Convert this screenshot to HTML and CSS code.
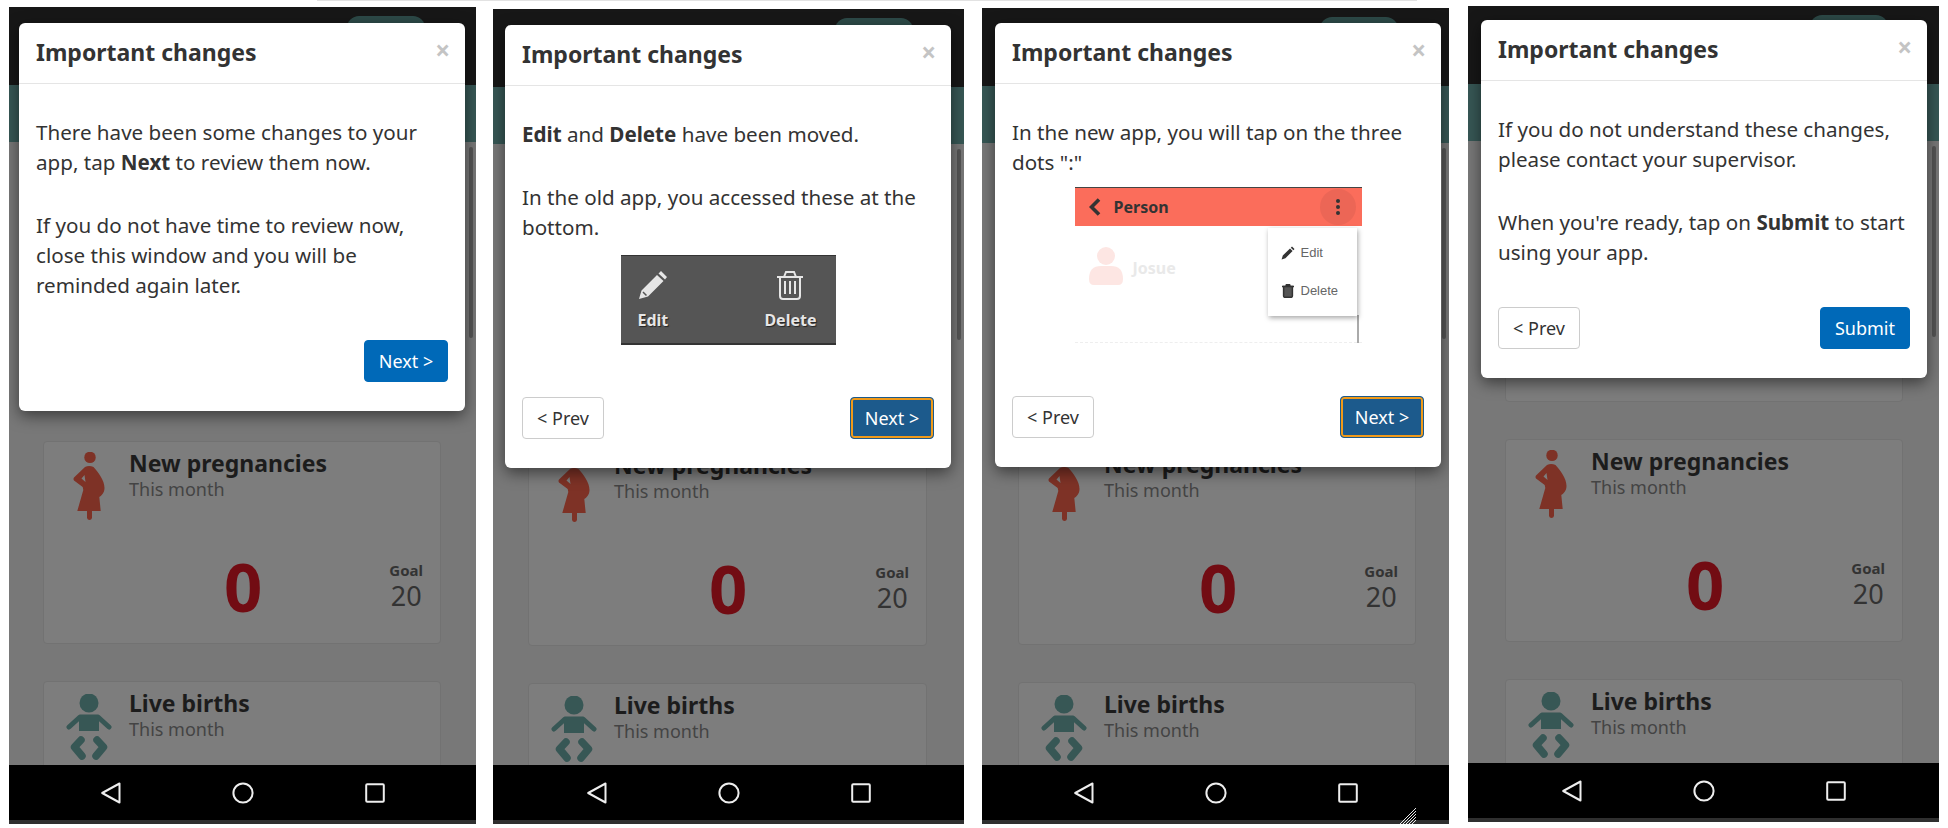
FILE: index.html
```html
<!DOCTYPE html>
<html lang="en">
<head>
    <meta charset="UTF-8">
    <title>Important changes</title>
    <link rel="stylesheet" href="styles.css">
</head>
<body>

    <svg class="defs" width="0" height="0">
        <symbol id="mother" viewBox="0 0 32 68">
            <circle cx="17" cy="5.4" r="5.7"/>
            <path fill-rule="evenodd" d="M12 15 Q16 13 20.5 15 C25 20 31.5 28 31.5 36 C31.5 41 28 44 26.3 45 L27.7 59 H19 V66 A2.6 2.6 0 0 1 14 66 V59 H4.3 L10.3 38 L9.7 35 L1 28.5 Q0 27 1 25.5 Z M8.5 26.5 L11.5 23 L12.5 30 Z"/>
        </symbol>
        <symbol id="baby" viewBox="0 0 46 68">
            <circle cx="23" cy="9" r="9.5"/>
            <path d="M3 33 L14 23 H32 L43 33" fill="none" stroke="#375755" stroke-width="5" stroke-linecap="round" stroke-linejoin="round"/>
            <rect x="13" y="22" width="20" height="15"/>
            <path d="M15 46 L8.5 53 L16 62 M31 46 L37.5 53 L30 62" fill="none" stroke="#375755" stroke-width="7.5" stroke-linecap="round" stroke-linejoin="round"/>
        </symbol>
    </svg>

    <!-- step 1 -->
    <div class="phone phone-one">
        <div class="status-bar"><span class="status-pill"></span></div>
        <div class="app-band"></div>
        <div class="app-content">
            <div class="card card-empty"></div>
            <div class="card">
                <div class="card-top">
                    <svg class="icon-mother"><use href="#mother"/></svg>
                    <div><div class="card-title">New pregnancies</div><div class="card-sub">This month</div></div>
                </div>
                <div class="card-count">0</div>
                <div class="card-goal"><b>Goal</b><span>20</span></div>
            </div>
            <div class="card">
                <div class="card-top">
                    <svg class="icon-baby"><use href="#baby"/></svg>
                    <div><div class="card-title">Live births</div><div class="card-sub">This month</div></div>
                </div>
            </div>
            <span class="scroll-thumb"></span>
        </div>
        <div class="nav-bar">
            <svg class="nav-back" viewBox="0 0 20 22"><path d="M18.5 1.5 V20.5 L1.2 11 Z"/></svg>
            <svg class="nav-home" viewBox="0 0 22 22"><circle cx="11" cy="11" r="9.6"/></svg>
            <svg class="nav-recent" viewBox="0 0 20 20"><rect x="1.2" y="1.2" width="17.6" height="17.6" rx="1"/></svg>
        </div>
        <div class="modal">
            <div class="modal-header"><h2>Important changes</h2><span class="modal-close">×</span></div>
            <div class="modal-body">
                <p>There have been some changes to your app, tap <b>Next</b> to review them now.</p>
                <p>If you do not have time to review now, close this window and you will be reminded again later.</p>
            </div>
            <div class="modal-footer footer-end"><button class="btn btn-next">Next &gt;</button></div>
        </div>
    </div>

    <!-- step 2 -->
    <div class="phone phone-two">
        <div class="status-bar"><span class="status-pill"></span></div>
        <div class="app-band"></div>
        <div class="app-content">
            <div class="card card-empty"></div>
            <div class="card">
                <div class="card-top">
                    <svg class="icon-mother"><use href="#mother"/></svg>
                    <div><div class="card-title">New pregnancies</div><div class="card-sub">This month</div></div>
                </div>
                <div class="card-count">0</div>
                <div class="card-goal"><b>Goal</b><span>20</span></div>
            </div>
            <div class="card">
                <div class="card-top">
                    <svg class="icon-baby"><use href="#baby"/></svg>
                    <div><div class="card-title">Live births</div><div class="card-sub">This month</div></div>
                </div>
            </div>
            <span class="scroll-thumb"></span>
        </div>
        <div class="nav-bar">
            <svg class="nav-back" viewBox="0 0 20 22"><path d="M18.5 1.5 V20.5 L1.2 11 Z"/></svg>
            <svg class="nav-home" viewBox="0 0 22 22"><circle cx="11" cy="11" r="9.6"/></svg>
            <svg class="nav-recent" viewBox="0 0 20 20"><rect x="1.2" y="1.2" width="17.6" height="17.6" rx="1"/></svg>
        </div>
        <div class="modal">
            <div class="modal-header"><h2>Important changes</h2><span class="modal-close">×</span></div>
            <div class="modal-body">
                <p><b>Edit</b> and <b>Delete</b> have been moved.</p>
                <p>In the old app, you accessed these at the bottom.</p>
                <div class="old-bar">
                    <div class="old-action">
                        <svg viewBox="0 0 30 30"><path d="M23 1 L29 7 L27 9.5 L20.5 3.5 Z M19 5 L25.5 11 L10 26.5 L1 29 L3.5 20.5 Z" fill="#e6e6e6"/><path d="M5 22 L8.5 25.5" stroke="#555" stroke-width="1.5"/></svg>
                        <span>Edit</span>
                    </div>
                    <div class="old-action">
                        <svg viewBox="0 0 30 30" fill="none" stroke="#e6e6e6" stroke-width="2"><path d="M2 7 H28 M9 7 L11 2 H19 L21 7"/><path d="M5 7 V26 Q5 29 8 29 H22 Q25 29 25 26 V7"/><path d="M10 11 V24 M15 11 V24 M20 11 V24"/></svg>
                        <span>Delete</span>
                    </div>
                </div>
            </div>
            <div class="modal-footer">
                <button class="btn btn-prev">&lt; Prev</button>
                <button class="btn btn-next btn-focus">Next &gt;</button>
            </div>
        </div>
    </div>

    <!-- step 3 -->
    <div class="phone phone-three">
        <div class="status-bar"><span class="status-pill"></span></div>
        <div class="app-band"></div>
        <div class="app-content">
            <div class="card card-empty"></div>
            <div class="card">
                <div class="card-top">
                    <svg class="icon-mother"><use href="#mother"/></svg>
                    <div><div class="card-title">New pregnancies</div><div class="card-sub">This month</div></div>
                </div>
                <div class="card-count">0</div>
                <div class="card-goal"><b>Goal</b><span>20</span></div>
            </div>
            <div class="card">
                <div class="card-top">
                    <svg class="icon-baby"><use href="#baby"/></svg>
                    <div><div class="card-title">Live births</div><div class="card-sub">This month</div></div>
                </div>
            </div>
            <span class="scroll-thumb"></span>
        </div>
        <div class="nav-bar">
            <svg class="nav-back" viewBox="0 0 20 22"><path d="M18.5 1.5 V20.5 L1.2 11 Z"/></svg>
            <svg class="nav-home" viewBox="0 0 22 22"><circle cx="11" cy="11" r="9.6"/></svg>
            <svg class="nav-recent" viewBox="0 0 20 20"><rect x="1.2" y="1.2" width="17.6" height="17.6" rx="1"/></svg>
        </div>
        <svg class="resize-grip" viewBox="0 0 16 16"><path d="M0 16 L16 0 M3 16 L16 3 M6 16 L16 6 M9 16 L16 9 M12 16 L16 12"/></svg>
        <div class="modal">
            <div class="modal-header"><h2>Important changes</h2><span class="modal-close">×</span></div>
            <div class="modal-body">
                <p>In the new app, you will tap on the three dots ":"</p>
                <div class="new-shot">
                    <div class="new-bar">
                        <svg class="new-chevron" viewBox="0 0 12 18"><path d="M10 1.5 L2.5 9 L10 16.5" fill="none" stroke="#333" stroke-width="3.6"/></svg>
                        <span class="new-title">Person</span>
                        <span class="new-dots"><i></i><i></i><i></i></span>
                    </div>
                    <div class="new-person">
                        <svg viewBox="0 0 34 38"><circle cx="17" cy="9" r="9"/><path d="M0 32 Q0 19 12 19 H22 Q34 19 34 32 Q34 38 29 38 H5 Q0 38 0 32 Z"/></svg>
                        <span>Josue</span>
                    </div>
                    <span class="new-scroll"></span>
                    <div class="new-menu">
                        <div class="new-item">
                            <svg viewBox="0 0 14 14"><path d="M11 .5 L13.5 3 L12.4 4.2 L9.8 1.7 Z M9 2.5 L11.6 5 L4.4 12.2 L.6 13.4 L1.8 9.6 Z"/></svg>
                            <span>Edit</span>
                        </div>
                        <div class="new-item">
                            <svg viewBox="0 0 14 14" fill="none" stroke="#333" stroke-width="1.5"><path d="M1 2.6 H13 M4.8 2.6 L5.4 .8 H8.6 L9.2 2.6"/><path d="M2.6 2.6 V12 Q2.6 13.3 3.9 13.3 H10.1 Q11.4 13.3 11.4 12 V2.6 Z" fill="#555"/></svg>
                            <span>Delete</span>
                        </div>
                    </div>
                </div>
            </div>
            <div class="modal-footer">
                <button class="btn btn-prev">&lt; Prev</button>
                <button class="btn btn-next btn-focus">Next &gt;</button>
            </div>
        </div>
    </div>

    <!-- step 4 -->
    <div class="phone phone-four">
        <div class="status-bar"><span class="status-pill"></span></div>
        <div class="app-band"></div>
        <div class="app-content">
            <div class="card card-empty"></div>
            <div class="card">
                <div class="card-top">
                    <svg class="icon-mother"><use href="#mother"/></svg>
                    <div><div class="card-title">New pregnancies</div><div class="card-sub">This month</div></div>
                </div>
                <div class="card-count">0</div>
                <div class="card-goal"><b>Goal</b><span>20</span></div>
            </div>
            <div class="card">
                <div class="card-top">
                    <svg class="icon-baby"><use href="#baby"/></svg>
                    <div><div class="card-title">Live births</div><div class="card-sub">This month</div></div>
                </div>
            </div>
            <span class="scroll-thumb"></span>
        </div>
        <div class="nav-bar">
            <svg class="nav-back" viewBox="0 0 20 22"><path d="M18.5 1.5 V20.5 L1.2 11 Z"/></svg>
            <svg class="nav-home" viewBox="0 0 22 22"><circle cx="11" cy="11" r="9.6"/></svg>
            <svg class="nav-recent" viewBox="0 0 20 20"><rect x="1.2" y="1.2" width="17.6" height="17.6" rx="1"/></svg>
        </div>
        <div class="modal">
            <div class="modal-header"><h2>Important changes</h2><span class="modal-close">×</span></div>
            <div class="modal-body">
                <p>If you do not understand these changes, please contact your supervisor.</p>
                <p>When you're ready, tap on <b>Submit</b> to start using your app.</p>
            </div>
            <div class="modal-footer">
                <button class="btn btn-prev">&lt; Prev</button>
                <button class="btn btn-next btn-submit">Submit</button>
            </div>
        </div>
    </div>

</body>
</html>
```

FILE: styles.css
```css
html, body {
    margin: 0;
    height: 828px;
    overflow: hidden;
    background-color: #fff;
}
body {
    position: relative;
    display: flex;
    align-items: flex-start;
    font-family: "Noto Sans", Arial, sans-serif;
    color: #333;
}
/* edge of the window left in the top of the screenshot */
body::before {
    content: "";
    position: absolute;
    top: 0;
    left: 317px;
    width: 1100px;
    height: 1px;
    background-color: #e2e2e2;
}
.defs {
    position: absolute;
}

/* phones */
.phone {
    position: relative;
    display: flex;
    flex-direction: column;
    overflow: hidden;
    box-sizing: border-box;
    background-color: #787878;
}
.phone-one {
    width: 467px;
    height: 817px;
    margin: 7px 0 0 9px;
}
.phone-two {
    width: 471px;
    height: 815px;
    margin: 9px 0 0 17px;
}
.phone-three {
    width: 467px;
    height: 816px;
    margin: 8px 0 0 18px;
}
.phone-four {
    width: 471px;
    height: 816px;
    margin: 6px 0 0 19px;
}
.status-bar {
    flex: none;
    position: relative;
    height: 78px;
    background-color: #171717;
}
.status-pill {
    position: absolute;
    top: 9px;
    right: 51px;
    width: 78px;
    height: 30px;
    border-radius: 12px;
    background-color: #2d4a48;
}
.app-band {
    flex: none;
    height: 57px;
    background-color: #375755;
}
.app-content {
    position: relative;
    flex: 1;
    min-height: 0;
    overflow: hidden;
    padding: 59px 35px 0 34px;
}
.phone-two .app-content { padding: 59px 37px 0 35px; }
.phone-three .app-content { padding: 59px 33px 0 36px; }
.phone-four .app-content { padding: 58px 36px 0 37px; }
.scroll-thumb {
    position: absolute;
    top: 5px;
    right: 3px;
    width: 4px;
    height: 191px;
    border-radius: 2px;
    background-color: #555;
}
.nav-bar {
    flex: none;
    display: flex;
    align-items: center;
    justify-content: center;
    gap: 111px;
    height: 54px;
    padding-top: 1px;
    border-bottom: 4px solid #2f2f2f;
    background-color: #000;
}
.nav-bar svg {
    fill: none;
    stroke: #eee;
    stroke-width: 2;
    stroke-linejoin: round;
}
.nav-back {
    width: 20px;
    height: 22px;
}
.nav-home {
    width: 22px;
    height: 22px;
}
.nav-recent {
    width: 20px;
    height: 20px;
}
.resize-grip {
    position: absolute;
    left: 418px;
    top: 800px;
    width: 16px;
    height: 16px;
    fill: none;
    stroke: #fff;
    stroke-width: .9;
}

/* cards behind the dialog */
.card {
    position: relative;
    box-sizing: border-box;
    height: 203px;
    margin-bottom: 37px;
    border: 1px solid #727272;
    border-radius: 4px;
    background-color: #7d7d7d;
}
.card-top {
    display: flex;
    gap: 24px;
    padding: 7px 0 0 29px;
}
.card-top svg {
    flex: none;
}
.icon-mother {
    width: 32px;
    height: 68px;
    margin-top: 3px;
    fill: #7e3226;
}
.icon-baby {
    width: 46px;
    height: 68px;
    margin: 5px -7px 0 -7px;
    fill: #375755;
}
.card-title {
    font-size: 23px;
    font-weight: bold;
    line-height: 28px;
    color: #1c1c1c;
}
.card-sub {
    font-size: 18px;
    line-height: 24px;
    color: #444;
}
.card-count {
    position: absolute;
    left: 180px;
    top: 99px;
    font-size: 67px;
    font-weight: bold;
    line-height: 90px;
    color: #720c13;
}
.card-goal {
    position: absolute;
    right: 17px;
    top: 117px;
    display: flex;
    flex-direction: column;
    align-items: center;
    color: #333;
}
.card-goal b {
    font-size: 15px;
    line-height: 22px;
}
.card-goal span {
    font-size: 27px;
    line-height: 30px;
}

/* dialog */
.modal {
    position: absolute;
    width: 446px;
    border-radius: 6px;
    background-color: #fff;
    box-shadow: 0 5px 15px rgba(0, 0, 0, .5);
}
.phone-one .modal { left: 10px; top: 16px; }
.phone-two .modal { left: 12px; top: 16px; }
.phone-three .modal { left: 13px; top: 15px; }
.phone-four .modal { left: 13px; top: 14px; }

.modal-header {
    display: flex;
    justify-content: space-between;
    box-sizing: border-box;
    height: 61px;
    padding: 0 17px;
    border-bottom: 1px solid #e5e5e5;
}
.modal-header h2 {
    margin: 0;
    font-size: 23px;
    line-height: 59px;
}
.modal-close {
    margin-right: -2px;
    font-size: 26px;
    font-weight: bold;
    line-height: 55px;
    color: #c4c4c4;
}
.modal-body {
    padding: 33px 17px 0 17px;
    font-size: 20.6px;
    line-height: 30px;
}
.modal-body p {
    margin: 0 0 33px 0;
}
.modal-body p:last-of-type {
    margin-bottom: 0;
}
.modal-footer {
    display: flex;
    justify-content: space-between;
    padding: 40px 17px 29px 17px;
}
.footer-end {
    justify-content: flex-end;
}
.btn {
    box-sizing: border-box;
    height: 42px;
    padding: 0;
    border-radius: 4px;
    font-family: inherit;
    font-size: 18px;
}
.btn-prev {
    width: 82px;
    border: 1px solid #ccc;
    background-color: #fff;
    color: #333;
}
.btn-next {
    width: 84px;
    border: 1px solid #0069b8;
    background-color: #0069b8;
    color: #fff;
}
.btn-focus {
    border: 1px solid #1c5a8c;
    background-color: #1c5a8c;
    box-shadow: inset 0 0 0 2px #f09a1a;
}
.btn-submit {
    width: 90px;
}

/* old action bar picture */
.old-bar {
    display: flex;
    justify-content: space-between;
    box-sizing: border-box;
    width: 215px;
    height: 90px;
    margin: 13px auto 12px auto;
    padding: 14px 19px 0 17px;
    border-top: 1px solid #333;
    border-bottom: 2px solid #333;
    background-color: #555;
}
.old-action {
    display: flex;
    flex-direction: column;
    align-items: center;
    font-size: 16px;
    font-weight: bold;
    line-height: 20px;
    color: #e6e6e6;
    text-shadow: 1px 1px 1px #222;
}
.old-action svg {
    width: 30px;
    height: 30px;
    margin-bottom: 10px;
}

/* new menu picture */
.new-shot {
    position: relative;
    width: 287px;
    height: 156px;
    margin: 10px auto 13px auto;
    border-bottom: 1px dashed #eee;
    box-sizing: border-box;
}
.new-bar {
    display: flex;
    align-items: center;
    box-sizing: border-box;
    height: 39px;
    padding: 0 6px 0 14px;
    border-top: 1px solid #444;
    background-color: #fb6d5b;
}
.new-chevron {
    width: 12px;
    height: 18px;
    margin-right: 13px;
}
.new-title {
    font-size: 16px;
    font-weight: bold;
    color: #333;
}
.new-dots {
    display: flex;
    flex-direction: column;
    align-items: center;
    justify-content: center;
    gap: 2px;
    width: 36px;
    height: 36px;
    margin-left: auto;
    border-radius: 50%;
    background-color: #ec6656;
}
.new-dots i {
    width: 4px;
    height: 4px;
    border-radius: 50%;
    background-color: #333;
}
.new-person {
    display: flex;
    align-items: center;
    gap: 10px;
    padding: 21px 0 0 14px;
    font-size: 16px;
    line-height: 24px;
    font-weight: bold;
    color: #e9e9e9;
}
.new-person svg {
    width: 34px;
    height: 38px;
    fill: #fde6e3;
}
.new-person span {
    margin-top: 3px;
}
.new-scroll {
    position: absolute;
    right: 3px;
    top: 128px;
    width: 2px;
    height: 28px;
    background-color: #aaa;
}
/* dropdown lies over the picture */
.new-menu {
    position: absolute;
    left: 193px;
    top: 41px;
    box-sizing: border-box;
    width: 89px;
    height: 88px;
    padding: 6px 0 0 13px;
    background-color: #fff;
    box-shadow: 1px 2px 5px rgba(0, 0, 0, .35);
}
.new-item {
    display: flex;
    align-items: center;
    gap: 6px;
    height: 38px;
    font-family: "Liberation Sans", Arial, sans-serif;
    font-size: 13px;
    line-height: 16px;
    color: #666;
}
.new-item svg {
    width: 14px;
    height: 14px;
    fill: #333;
}
```
